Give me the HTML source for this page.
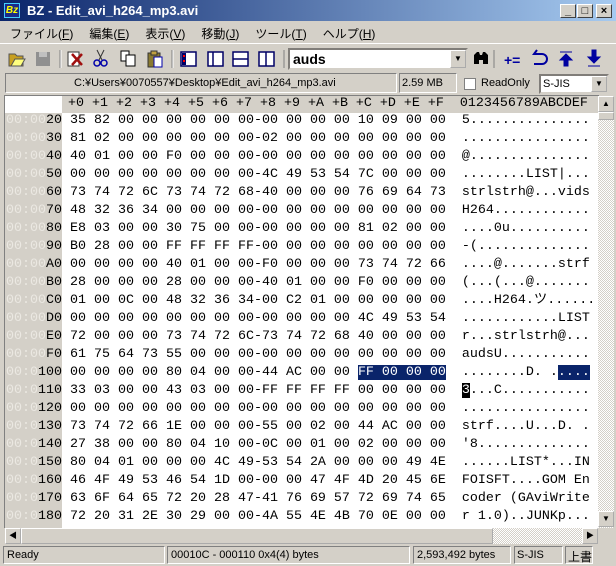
<!DOCTYPE html>
<html><head><meta charset="utf-8"><style>
*{margin:0;padding:0;box-sizing:border-box}
body{width:616px;height:566px;background:#d4d0c8;position:relative;overflow:hidden;font-family:"Liberation Sans","Noto Sans CJK JP",sans-serif;font-size:12px}
.a{position:absolute}
.title{left:0;top:0;width:616px;height:21px;background:linear-gradient(90deg,#0a246a,#a6caf0);color:#fff;font-weight:bold;font-size:13px}
.btn{width:16px;height:14px;background:#d4d0c8;border:1px solid;border-color:#fff #404040 #404040 #fff;top:4px;font-size:11px;color:#000;text-align:center;line-height:12px;font-weight:bold}
.menu span{margin-right:16px}
.sunk{border:1px solid;border-color:#808080 #fff #fff #808080}
.mono{font-family:"Liberation Mono","Noto Sans CJK JP",monospace;font-size:13.33px;line-height:18px;white-space:pre}
.row{height:18px}
.fd{color:#ebe8e2}
.sel{background:#0a246a;color:#fff}
.tb{top:48px;height:18px;width:20px}
</style></head><body>
<div class="a title"><div class="a" style="left:4px;top:3px;width:16px;height:15px;background:#1a2a8a;border:1px solid #4cf;color:#ff0;font-size:10px;font-style:italic;line-height:13px;text-align:center">Bz</div><div class="a" style="left:27px;top:3px">BZ - Edit_avi_h264_mp3.avi</div>
<div class="a btn" style="left:560px">_</div><div class="a btn" style="left:577px">□</div><div class="a btn" style="left:596px">×</div></div>
<div class="a menu" style="left:10px;top:25px;font-size:12px"><span>ファイル(<u>F</u>)</span><span>編集(<u>E</u>)</span><span>表示(<u>V</u>)</span><span>移動(<u>J</u>)</span><span>ツール(<u>T</u>)</span><span>ヘルプ(<u>H</u>)</span></div>
<!-- toolbar -->
<div class="a" style="left:0;top:43px;width:616px;height:1px;background:#fff"></div>
<svg class="a" style="left:0;top:44px" width="290" height="28">
<path d="M9 10h6l2 2h6v10H9z" fill="#c8a020" stroke="#555"/><path d="M11 22l4-7h10l-4 7z" fill="#ffff80" stroke="#555"/>
<rect x="36" y="8" width="14" height="14" fill="#909090"/><rect x="39" y="8" width="8" height="5" fill="#c0c0c0"/>
<line x1="60" y1="6" x2="60" y2="24" stroke="#808080"/><line x1="61" y1="6" x2="61" y2="24" stroke="#fff"/>
<rect x="68" y="8" width="11" height="14" fill="#fff" stroke="#333"/><path d="M72 10l10 11M82 10l-10 11" stroke="#a01010" stroke-width="2.5"/>
<path d="M97 6l5 10M104 6l-5 10" stroke="#333"/><circle cx="97" cy="19" r="3" fill="none" stroke="#00a" stroke-width="1.5"/><circle cx="104" cy="19" r="3" fill="none" stroke="#00a" stroke-width="1.5"/>
<rect x="121" y="7" width="8" height="10" fill="#fff" stroke="#000"/><rect x="126" y="11" width="9" height="11" fill="#fff" stroke="#000"/>
<rect x="148" y="9" width="12" height="14" fill="#8a7a30" stroke="#333"/><rect x="151" y="7" width="6" height="4" fill="#c0a040" stroke="#333"/><rect x="154" y="13" width="8" height="10" fill="#fff" stroke="#00a"/>
<line x1="172" y1="6" x2="172" y2="24" stroke="#808080"/><line x1="173" y1="6" x2="173" y2="24" stroke="#fff"/>
<rect x="181" y="8" width="15" height="14" fill="#fff" stroke="#006" stroke-width="1.5"/><rect x="182" y="9" width="4" height="12" fill="#006"/><rect x="183" y="11" width="2" height="2" fill="red"/><rect x="183" y="16" width="2" height="2" fill="red"/>
<rect x="208" y="8" width="15" height="14" fill="#fff" stroke="#006" stroke-width="1.5"/><line x1="213" y1="8" x2="213" y2="22" stroke="#006" stroke-width="1.5"/>
<rect x="233" y="8" width="15" height="14" fill="#fff" stroke="#006" stroke-width="1.5"/><line x1="233" y1="15" x2="248" y2="15" stroke="#006" stroke-width="1.5"/>
<rect x="259" y="8" width="15" height="14" fill="#fff" stroke="#006" stroke-width="1.5"/><line x1="266" y1="8" x2="266" y2="22" stroke="#006" stroke-width="1.5"/>
<line x1="284" y1="6" x2="284" y2="24" stroke="#808080"/>
</svg>
<div class="a sunk" style="left:288px;top:48px;width:180px;height:22px;background:#fff;border:2px inset #d4d0c8"><span style="position:absolute;left:3px;top:1px;font-size:14px;font-weight:bold">auds</span>
<div class="a" style="right:0;top:0;width:16px;height:18px;background:#d4d0c8;border:1px outset #fff;font-size:8px;text-align:center;line-height:16px">▼</div></div>
<svg class="a" style="left:470px;top:44px" width="146" height="28">
<path d="M4 20v-9l3-3h2l1 3 2 0 1-3h2l3 3v9h-5v-4h-4v4z" fill="#000"/><line x1="24" y1="6" x2="24" y2="24" stroke="#808080"/>
<text x="34" y="21" font-family="Liberation Sans" font-weight="bold" font-size="14" fill="#0000a0">+=</text>
<path d="M67 10h-3l3-4M64 10h8a5 5 0 0 1 0 10h-8" fill="none" stroke="#0000a0" stroke-width="2"/>
<path d="M90 8h12M96 10l-6 6h4v6h4v-6h4z" fill="#0000a0" stroke="#0000a0"/>
<path d="M118 22h12M122 6h4v7h4l-6 6-6-6h4z" fill="#0000a0" stroke="#0000a0"/>
</svg>
<!-- path bar -->
<div class="a sunk" style="left:5px;top:73px;width:392px;height:20px;border-color:#808080 #fff #fff #808080"><span style="position:absolute;left:68px;top:3px;font-size:11px">C:¥Users¥0070557¥Desktop¥Edit_avi_h264_mp3.avi</span></div>
<div class="a sunk" style="left:399px;top:73px;width:58px;height:20px"><span style="position:absolute;left:2px;top:3px;font-size:11px">2.59 MB</span></div>
<div class="a" style="left:464px;top:78px;width:12px;height:12px;background:#fff;border:1px solid #808080"></div>
<div class="a" style="left:481px;top:77px;font-size:11px">ReadOnly</div>
<div class="a" style="left:539px;top:74px;width:70px;height:20px;background:#fff;border:2px inset #d4d0c8"><span style="position:absolute;left:2px;top:2px;font-size:11px">S-JIS</span><div class="a" style="right:0;top:0;width:16px;height:16px;background:#d4d0c8;border:1px outset #fff;font-size:8px;text-align:center;line-height:14px">▼</div></div>
<!-- hex view -->
<div class="a" style="left:4px;top:95px;width:595px;height:433px;background:#fff;border-left:1px solid #808080;border-top:1px solid #808080"></div>
<div class="a" style="left:62px;top:96px;width:536px;height:17px;background:#d4d0c8"></div>
<div class="a" style="left:5px;top:113px;width:57px;height:415px;background:#d4d0c8"></div>
<div class="a mono" style="left:68px;top:95px">+0 +1 +2 +3 +4 +5 +6 +7 +8 +9 +A +B +C +D +E +F  0123456789ABCDEF</div>
<div class="a mono" style="left:6px;top:112px"><div class="row"><span class="fd">00:00</span>20 35 82 00 00 00 00 00 00-00 00 00 00 10 09 00 00  5...............</div><div class="row"><span class="fd">00:00</span>30 81 02 00 00 00 00 00 00-02 00 00 00 00 00 00 00  ................</div><div class="row"><span class="fd">00:00</span>40 40 01 00 00 F0 00 00 00-00 00 00 00 00 00 00 00  @...............</div><div class="row"><span class="fd">00:00</span>50 00 00 00 00 00 00 00 00-4C 49 53 54 7C 00 00 00  ........LIST|...</div><div class="row"><span class="fd">00:00</span>60 73 74 72 6C 73 74 72 68-40 00 00 00 76 69 64 73  strlstrh@...vids</div><div class="row"><span class="fd">00:00</span>70 48 32 36 34 00 00 00 00-00 00 00 00 00 00 00 00  H264............</div><div class="row"><span class="fd">00:00</span>80 E8 03 00 00 30 75 00 00-00 00 00 00 81 02 00 00  ....0u..........</div><div class="row"><span class="fd">00:00</span>90 B0 28 00 00 FF FF FF FF-00 00 00 00 00 00 00 00  -(..............</div><div class="row"><span class="fd">00:00</span>A0 00 00 00 00 40 01 00 00-F0 00 00 00 73 74 72 66  ....@.......strf</div><div class="row"><span class="fd">00:00</span>B0 28 00 00 00 28 00 00 00-40 01 00 00 F0 00 00 00  (...(...@.......</div><div class="row"><span class="fd">00:00</span>C0 01 00 0C 00 48 32 36 34-00 C2 01 00 00 00 00 00  ....H264.ツ......</div><div class="row"><span class="fd">00:00</span>D0 00 00 00 00 00 00 00 00-00 00 00 00 4C 49 53 54  ............LIST</div><div class="row"><span class="fd">00:00</span>E0 72 00 00 00 73 74 72 6C-73 74 72 68 40 00 00 00  r...strlstrh@...</div><div class="row"><span class="fd">00:00</span>F0 61 75 64 73 55 00 00 00-00 00 00 00 00 00 00 00  audsU...........</div><div class="row"><span class="fd">00:0</span>100 00 00 00 00 80 04 00 00-44 AC 00 00 <span class="sel">FF 00 00 00</span>  ........D. .<span class="sel">....</span></div><div class="row"><span class="fd">00:0</span>110 33 03 00 00 43 03 00 00-FF FF FF FF 00 00 00 00  <span style="background:#000;color:#fff">3</span>...C...........</div><div class="row"><span class="fd">00:0</span>120 00 00 00 00 00 00 00 00-00 00 00 00 00 00 00 00  ................</div><div class="row"><span class="fd">00:0</span>130 73 74 72 66 1E 00 00 00-55 00 02 00 44 AC 00 00  strf....U...D. .</div><div class="row"><span class="fd">00:0</span>140 27 38 00 00 80 04 10 00-0C 00 01 00 02 00 00 00  '8..............</div><div class="row"><span class="fd">00:0</span>150 80 04 01 00 00 00 4C 49-53 54 2A 00 00 00 49 4E  ......LIST*...IN</div><div class="row"><span class="fd">00:0</span>160 46 4F 49 53 46 54 1D 00-00 00 47 4F 4D 20 45 6E  FOISFT....GOM En</div><div class="row"><span class="fd">00:0</span>170 63 6F 64 65 72 20 28 47-41 76 69 57 72 69 74 65  coder (GAviWrite</div><div class="row" style="height:14px;overflow:hidden"><span class="fd">00:0</span>180 72 20 31 2E 30 29 00 00-4A 55 4E 4B 70 0E 00 00  r 1.0)..JUNKp...</div></div>
<!-- vscroll -->
<div class="a" style="left:598px;top:96px;width:16px;height:432px;background:repeating-conic-gradient(#fff 0 25%,#d4d0c8 0 50%) 0 0/2px 2px"></div>
<div class="a" style="left:598px;top:96px;width:16px;height:16px;background:#d4d0c8;border:1px outset #fff;font-size:8px;text-align:center;line-height:14px">▲</div>
<div class="a" style="left:598px;top:112px;width:16px;height:8px;background:#d4d0c8;border:1px outset #fff"></div>
<div class="a" style="left:598px;top:511px;width:16px;height:16px;background:#d4d0c8;border:1px outset #fff;font-size:8px;text-align:center;line-height:14px">▼</div>
<!-- hscroll -->
<div class="a" style="left:5px;top:528px;width:593px;height:16px;background:repeating-conic-gradient(#fff 0 25%,#d4d0c8 0 50%) 0 0/2px 2px"></div>
<div class="a" style="left:5px;top:528px;width:16px;height:16px;background:#d4d0c8;border:1px outset #fff;font-size:8px;text-align:center;line-height:14px">◀</div>
<div class="a" style="left:21px;top:528px;width:472px;height:16px;background:#d4d0c8;border:1px outset #fff"></div>
<div class="a" style="left:582px;top:528px;width:16px;height:16px;background:#d4d0c8;border:1px outset #fff;font-size:8px;text-align:center;line-height:14px">▶</div>
<!-- status -->
<div class="a sunk" style="left:3px;top:546px;width:162px;height:18px"><span style="position:absolute;left:3px;top:2px;font-size:11px">Ready</span></div>
<div class="a sunk" style="left:167px;top:546px;width:243px;height:18px"><span style="position:absolute;left:3px;top:2px;font-size:11px">00010C - 000110 0x4(4) bytes</span></div>
<div class="a sunk" style="left:413px;top:546px;width:98px;height:18px"><span style="position:absolute;left:3px;top:2px;font-size:11px">2,593,492 bytes</span></div>
<div class="a sunk" style="left:514px;top:546px;width:49px;height:18px"><span style="position:absolute;left:2px;top:2px;font-size:11px">S-JIS</span></div>
<div class="a sunk" style="left:565px;top:546px;width:28px;height:18px"><span style="position:absolute;left:2px;top:1px;font-size:12px">上書</span></div>
</body></html>
